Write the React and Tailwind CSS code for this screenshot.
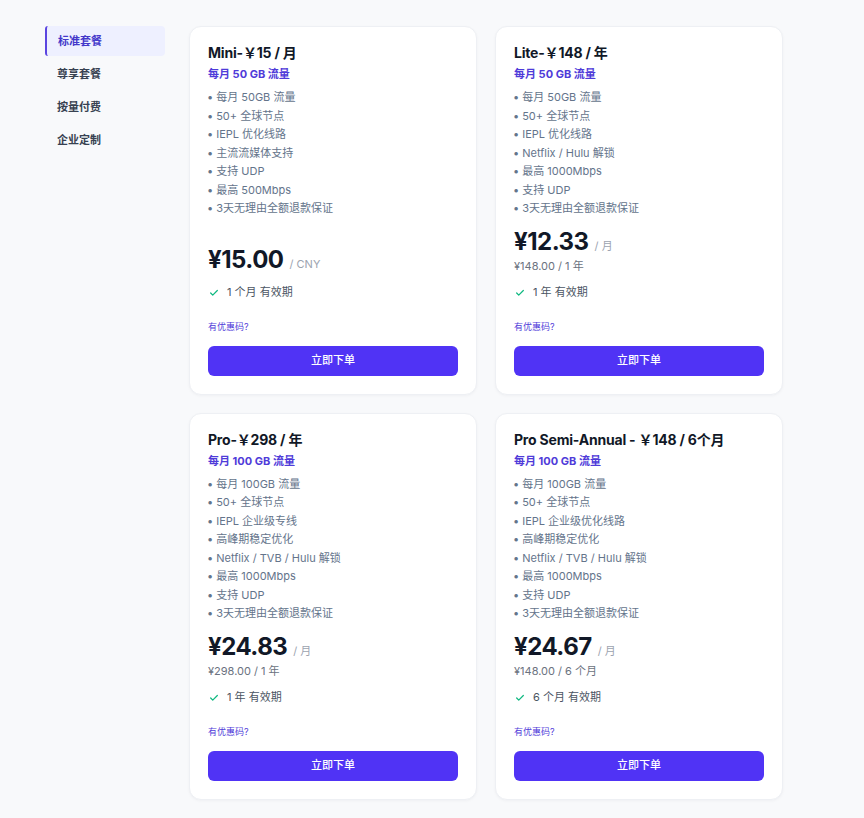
import { Check } from 'lucide-react'

const menu = ['标准套餐', '尊享套餐', '按量付费', '企业定制']

const plans = [
  {
    title: 'Mini-￥15 / 月',
    quota: '每月 50 GB 流量',
    features: ['每月 50GB 流量', '50+ 全球节点', 'IEPL 优化线路', '主流流媒体支持', '支持 UDP', '最高 500Mbps', '3天无理由全额退款保证'],
    price: '¥15.00',
    unit: '/ CNY',
    period: '1 个月 有效期',
  },
  {
    title: 'Lite-￥148 / 年',
    quota: '每月 50 GB 流量',
    features: ['每月 50GB 流量', '50+ 全球节点', 'IEPL 优化线路', 'Netflix / Hulu 解锁', '最高 1000Mbps', '支持 UDP', '3天无理由全额退款保证'],
    price: '¥12.33',
    unit: '/ 月',
    total: '¥148.00 / 1 年',
    period: '1 年 有效期',
  },
  {
    title: 'Pro-￥298 / 年',
    quota: '每月 100 GB 流量',
    features: ['每月 100GB 流量', '50+ 全球节点', 'IEPL 企业级专线', '高峰期稳定优化', 'Netflix / TVB / Hulu 解锁', '最高 1000Mbps', '支持 UDP', '3天无理由全额退款保证'],
    price: '¥24.83',
    unit: '/ 月',
    total: '¥298.00 / 1 年',
    period: '1 年 有效期',
  },
  {
    title: 'Pro Semi-Annual - ￥148 / 6个月',
    quota: '每月 100 GB 流量',
    features: ['每月 100GB 流量', '50+ 全球节点', 'IEPL 企业级优化线路', '高峰期稳定优化', 'Netflix / TVB / Hulu 解锁', '最高 1000Mbps', '支持 UDP', '3天无理由全额退款保证'],
    price: '¥24.67',
    unit: '/ 月',
    total: '¥148.00 / 6 个月',
    period: '6 个月 有效期',
  },
]

function PlanCard({ plan }) {
  return (
    <div className="flex flex-col rounded-xl border border-[#eef0f4] bg-white px-[18px] pt-4 pb-[18px] shadow-[0_1px_3px_rgba(15,23,42,0.04)]">
      <h3 className="text-[14px] font-bold leading-5 tracking-[-0.2px] text-[#111827]">{plan.title}</h3>
      <p className="mt-[3px] text-[11px] font-bold leading-4 text-[#4f3bd9]">{plan.quota}</p>
      <ul className="mt-1.5 text-[11px] text-[#64748b]">
        {plan.features.map((f) => (
          <li key={f} className="leading-[18.5px]">
            <span className="-ml-px mr-[3px]">•</span>
            {f}
          </li>
        ))}
      </ul>

      {/* price block sits at the bottom of the card */}
      <div className="mt-auto pt-2">
        <div className="flex items-baseline gap-1.5">
          <span className="text-[24px] font-bold leading-[32px] tracking-[-0.5px] text-[#111827]">{plan.price}</span>
          <span className="text-[11px] text-[#9ca3af]">{plan.unit}</span>
        </div>
        {plan.total && <p className="text-[11px] leading-4 text-[#6b7280]">{plan.total}</p>}
        <div className={`${plan.total ? 'mt-[10px]' : 'mt-2'} flex h-[18px] items-center gap-2 pl-px text-[11px] text-[#4b5563]`}>
          <Check className="h-[10px] w-[10px] text-[#10b981]" strokeWidth={3} />
          <span>{plan.period}</span>
        </div>
        <p className="mt-[18px] text-[9px] leading-[14px] text-[#4f3bd9]">有优惠码?</p>
        <button className="mt-3 h-[30px] w-full rounded-md bg-[#5033f5] text-[11px] font-medium text-white">立即下单</button>
      </div>
    </div>
  )
}

export default function App() {
  return (
    <div
      className="min-h-screen bg-[#f8f9fb] pt-[26px] pl-[45px]"
      style={{ fontFamily: 'Inter, "Noto Sans CJK SC", sans-serif' }}
    >
      <div className="flex gap-6">
        {/* Side menu */}
        <nav className="flex w-[120px] shrink-0 flex-col gap-[3px]">
          {menu.map((item, i) => (
            <div
              key={item}
              className={`flex h-[30px] items-center pl-3 text-[11px] font-semibold ${
                i === 0
                  ? 'rounded-r-sm rounded-l-[3px] border-l-2 border-[#5b45e0] bg-[#eef0ff] pl-[11px] text-[#4338ca]'
                  : 'text-[#374151]'
              }`}
            >
              {item}
            </div>
          ))}
        </nav>

        {/* Plans */}
        <div className="grid grid-cols-[288px_288px] gap-[18px]">
          {plans.map((p) => (
            <PlanCard key={p.title} plan={p} />
          ))}
        </div>
      </div>
    </div>
  )
}
